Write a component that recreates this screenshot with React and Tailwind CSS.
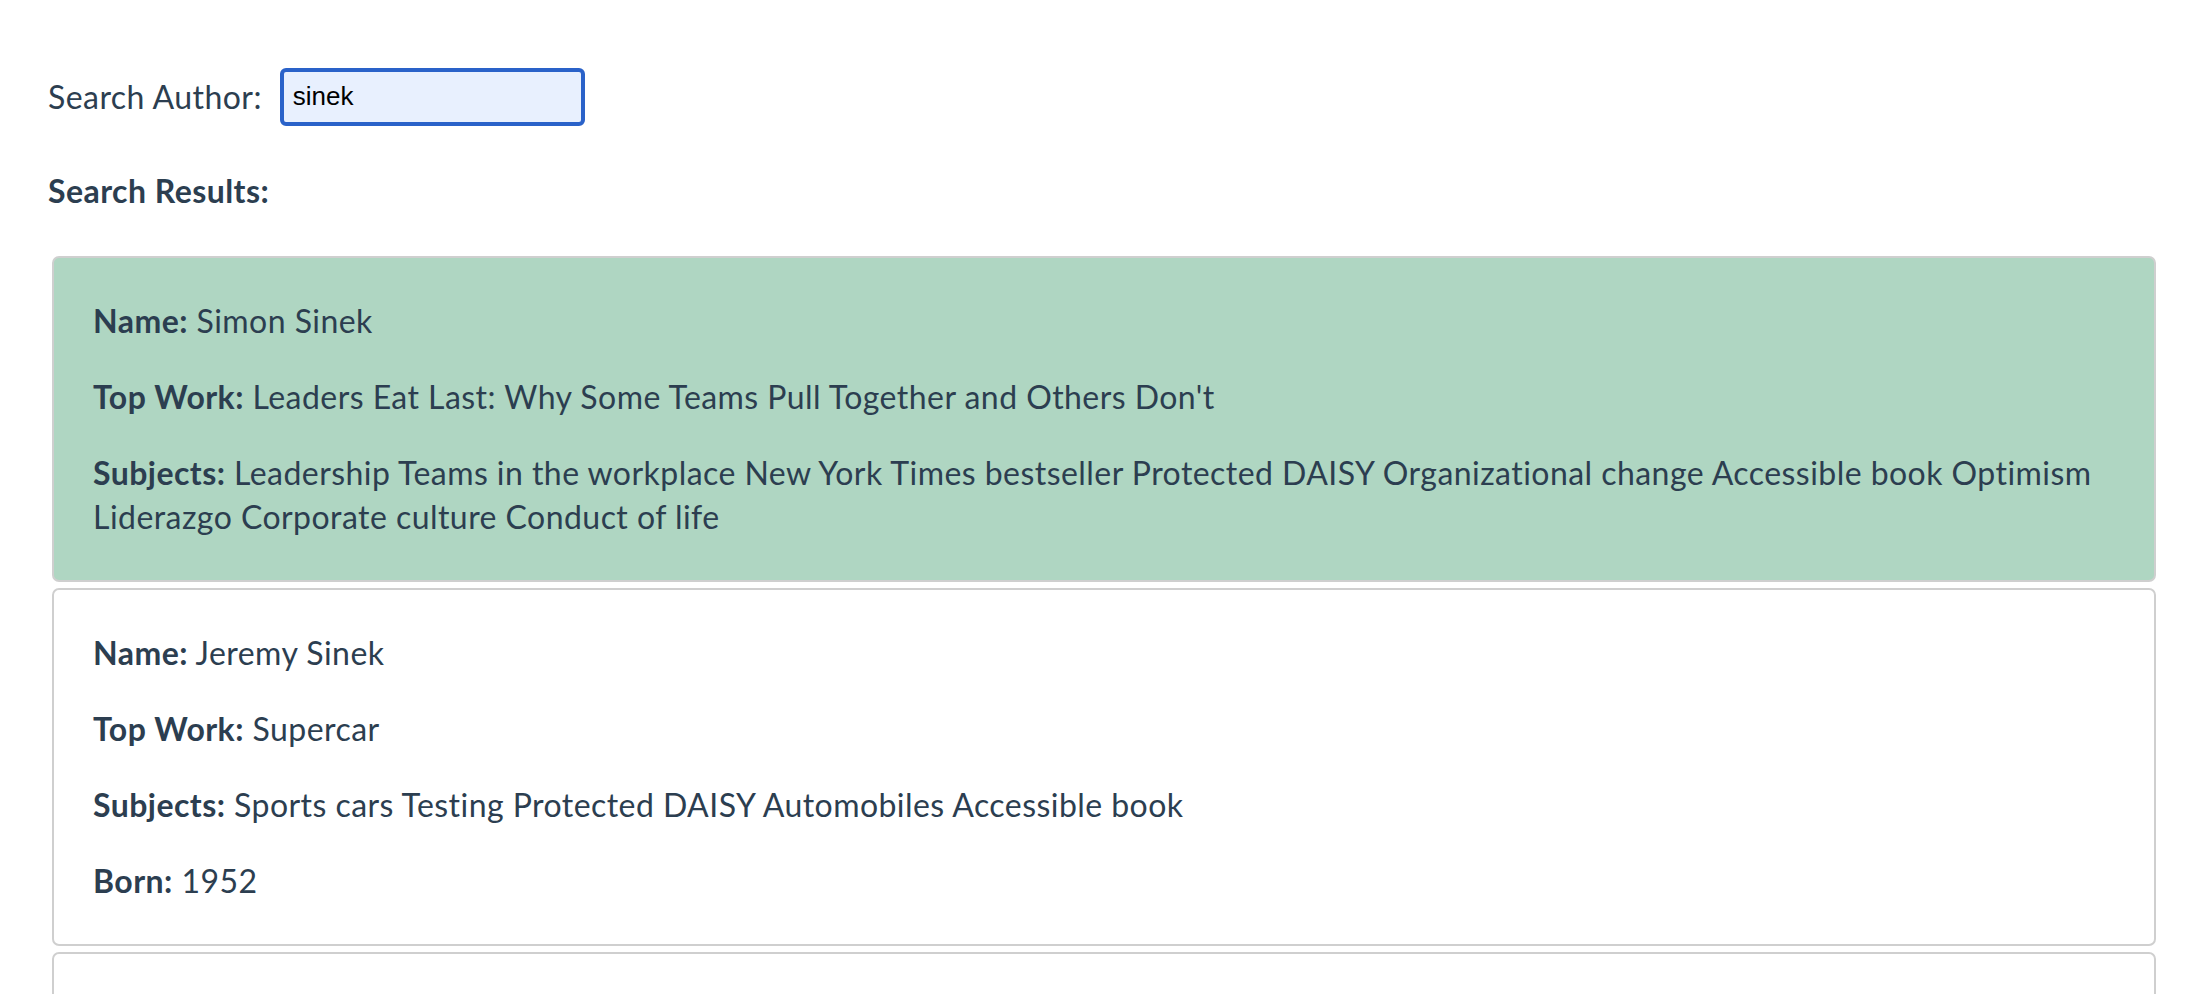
import React, { useState } from 'react';

const results = [
  {
    name: 'Simon Sinek',
    topWork: "Leaders Eat Last: Why Some Teams Pull Together and Others Don't",
    subjects:
      'Leadership Teams in the workplace New York Times bestseller Protected DAISY Organizational change Accessible book Optimism Liderazgo Corporate culture Conduct of life',
    selected: true,
  },
  {
    name: 'Jeremy Sinek',
    topWork: 'Supercar',
    subjects: 'Sports cars Testing Protected DAISY Automobiles Accessible book',
    born: '1952',
  },
  {
    name: 'Simon O. Sinek',
    topWork: 'Start with Why',
    subjects: 'Leadership Motivation (Psychology)',
  },
];

const Field = ({ label, value }) => (
  <p className="my-[32px]">
    <span className="font-bold">{label}:</span> {value}
  </p>
);

const ResultCard = ({ item }) => (
  <div
    className={`ml-[4px] mr-[2px] mb-[6px] rounded-[7px] border-2 border-[#cfcfcf] pl-[39px] pr-[36px] py-[9px] ${
      item.selected ? 'bg-[#afd6c2]' : 'bg-white'
    }`}
  >
    <Field label="Name" value={item.name} />
    <Field label="Top Work" value={item.topWork} />
    <Field label="Subjects" value={item.subjects} />
    {item.born && <Field label="Born" value={item.born} />}
  </div>
);

export default function App() {
  const [query, setQuery] = useState('sinek');

  return (
    <div className="min-h-screen bg-white px-[48px] pt-[68px] text-[32px] leading-[44px] tracking-[0.45px] text-[#2c3e50] font-['Lato','Noto_Sans',sans-serif]">
      {/* Search box */}
      <div className="flex h-[57px] items-center">
        <label htmlFor="author" className="mr-[18px]">
          Search Author:
        </label>
        <input
          id="author"
          type="text"
          value={query}
          onChange={(e) => setQuery(e.target.value)}
          className="h-[58px] w-[305px] rounded-[6px] border-4 border-[#2a62c9] bg-[#e8f0fe] pl-[9px] text-[26px] tracking-normal text-black font-['Liberation_Sans',Arial,sans-serif] outline-none"
        />
      </div>

      <h3 className="mt-[44px] mb-[43px] font-bold">Search Results:</h3>

      {/* Results */}
      <div>
        {results.map((item) => (
          <ResultCard key={item.name} item={item} />
        ))}
      </div>
    </div>
  );
}
